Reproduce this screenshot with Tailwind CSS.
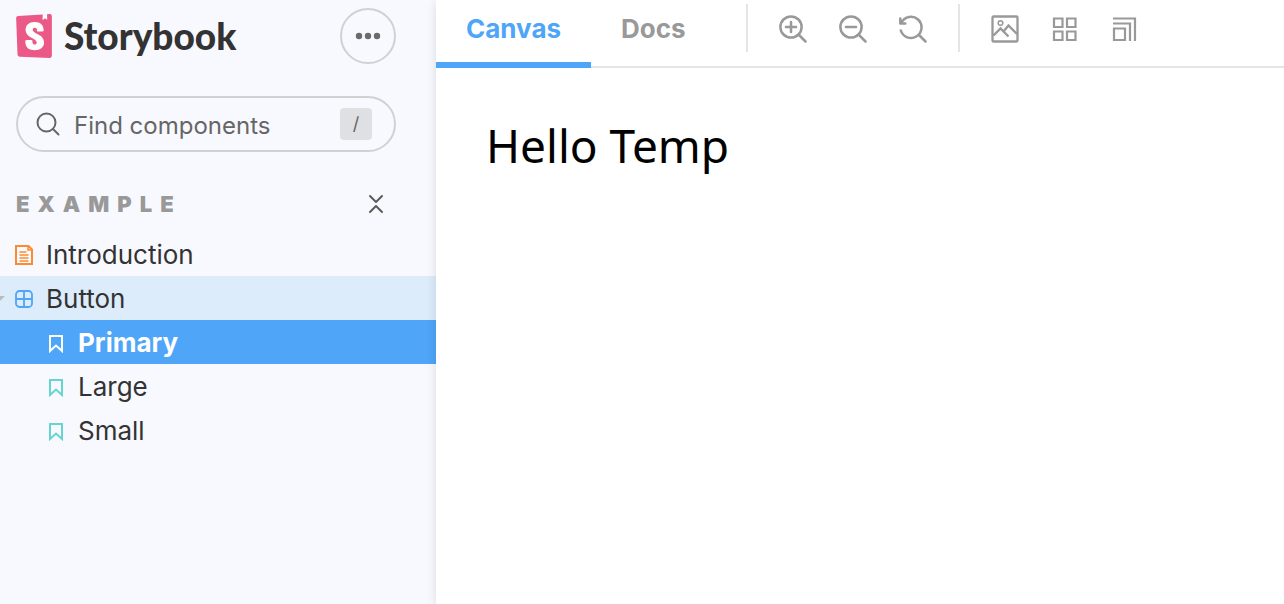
<!DOCTYPE html>
<html lang="en">
<head>
<meta charset="utf-8">
<title>Storybook</title>
<script src="https://cdn.jsdelivr.net/npm/@tailwindcss/browser@4"></script>
</head>
<body class="flex min-h-screen overflow-x-hidden bg-[#f8f9fe] font-['Inter',sans-serif] text-[#333]">
<aside class="w-[436px] shrink-0 pt-2">
  <header class="flex items-center justify-between pr-10 pl-4">
    <a href="#" class="flex items-center gap-3">
      <svg class="h-11 w-9" viewBox="2.300 0 19.400 24" preserveAspectRatio="none" aria-hidden="true">
        <path fill="#fff" d="M6 4h12v16H6zM16.700.400h2.400v2.800h-2.400z"/>
        <path fill="#eb5986" d="M16.71.243l-.12 2.71a.18.18 0 00.29.15l1.06-.8.9.7a.18.18 0 00.28-.14l-.1-2.76 1.33-.1a1.2 1.2 0 011.279 1.2v21.596a1.2 1.2 0 01-1.26 1.2l-16.096-.72a1.2 1.2 0 01-1.15-1.16l-.75-19.797a1.2 1.2 0 011.13-1.27L16.7.222zM13.64 9.3c0 .47 3.16.24 3.59-.08 0-3.2-1.72-4.89-4.859-4.89-3.15 0-4.899 1.72-4.899 4.29 0 4.45 5.999 4.53 5.999 6.959 0 .7-.32 1.1-1.05 1.1-.96 0-1.35-.49-1.3-2.16 0-.36-3.649-.48-3.769 0-.27 4.03 2.23 5.2 5.099 5.2 2.79 0 4.969-1.49 4.969-4.18 0-4.77-6.099-4.64-6.099-6.999 0-.97.72-1.1 1.13-1.1.45 0 1.25.07 1.19 1.87z"/>
      </svg>
      <span class="font-['Lato',sans-serif] text-[37px] leading-11 font-black">Storybook</span>
    </a>
    <button aria-label="Shortcuts" class="flex size-14 items-center justify-center rounded-full border-2 border-[#d0d1d5]">
      <svg class="h-2 w-7" viewBox="0 0 28 8" fill="#6b6b6b"><circle cx="5" cy="4" r="3.2"/><circle cx="14" cy="4" r="3.2"/><circle cx="23" cy="4" r="3.2"/></svg>
    </button>
  </header>
  <label class="mt-8 mr-10 ml-4 flex h-14 items-center rounded-full border-2 border-[#d0d1d3] pr-[22px] pl-[18px]">
    <svg class="size-6 shrink-0" viewBox="0 0 24 24" fill="none" stroke="#666" stroke-width="2" stroke-linecap="round"><circle cx="10.5" cy="10.5" r="9"/><path d="M17 17l5.500 5.500"/></svg>
    <input type="text" placeholder="Find components" aria-label="Find components" class="ml-[14px] min-w-0 flex-1 pt-1 text-2xl outline-none placeholder:text-[#666]">
    <kbd class="flex h-8 w-8 items-center justify-center rounded bg-[#dfe0e3] font-['Inter',sans-serif] text-lg text-[#666]">/</kbd>
  </label>
  <div class="mt-9 flex h-8 items-center justify-between pr-[52px] pl-4">
    <h2 class="text-[22px] leading-8 font-black tracking-[8px] text-[#999]">EXAMPLE</h2>
    <button aria-label="Collapse all" class="flex h-8 w-4 items-center"><svg class="h-5 w-4" viewBox="0 0 16 20" fill="none" stroke="#5c5c5c" stroke-width="2" stroke-linecap="round" stroke-linejoin="round"><path d="M2 2l6 6 6-6M2 18l6-6 6 6"/></svg></button>
  </div>
  <nav class="mt-3 text-[26px] leading-10">
    <a href="#" class="flex h-11 items-center gap-3 pt-[2px] pl-[14px]">
      <svg class="size-5 shrink-0" viewBox="0 0 20 20" fill="none" stroke="#fc8a30" stroke-width="2"><path d="M2 1h12.500L18 4.500V19H2z"/><path d="M14 1v4h4M5.500 7h7M5.500 10h9M5.500 13h9M5.500 16h9" stroke-width="1.500"/></svg>
      Introduction
    </a>
    <a href="#" class="flex h-11 items-center bg-[#dcecfb] pt-[2px]">
      <svg class="h-5 w-[5px] shrink-0" viewBox="0 0 5 20" fill="#bbb"><path d="M-5 7H5L0 12z"/></svg>
      <svg class="mr-3 ml-[9px] size-5 shrink-0" viewBox="0 0 20 20" fill="none" stroke="#4fa5f7" stroke-width="1.800"><rect x="2" y="2" width="16" height="16" rx="3.500"/><path d="M10 2v16M2 10h16"/></svg>
      Button
    </a>
    <a href="#" class="flex h-11 items-center gap-3 bg-[#4fa5f7] pt-[2px] pl-[46px] font-bold text-white">
      <svg class="size-5 shrink-0" viewBox="0 0 20 20" fill="none" stroke="#fff" stroke-width="2"><path d="M4 3h12v15l-6-5.500L4 18z"/></svg>
      Primary
    </a>
    <a href="#" class="flex h-11 items-center gap-3 pt-[2px] pl-[46px]">
      <svg class="size-5 shrink-0" viewBox="0 0 20 20" fill="none" stroke="#66d5cf" stroke-width="2"><path d="M4 3h12v15l-6-5.500L4 18z"/></svg>
      Large
    </a>
    <a href="#" class="flex h-11 items-center gap-3 pt-[2px] pl-[46px]">
      <svg class="size-5 shrink-0" viewBox="0 0 20 20" fill="none" stroke="#66d5cf" stroke-width="2"><path d="M4 3h12v15l-6-5.500L4 18z"/></svg>
      Small
    </a>
  </nav>
</aside>
<main class="min-w-0 flex-1 bg-white shadow-[0_2px_10px_rgba(0,0,0,0.12)]">
  <div class="flex h-[68px] items-start border-b-2 border-[#e5e5e5] text-[#999]">
    <div class="flex h-[68px] shrink-0 text-[26px] leading-[58px] font-bold">
      <button class="h-[68px] border-b-6 border-[#4fa5f7] px-[30px] pb-1 text-[#4fa5f7]">Canvas</button>
      <button class="h-[68px] px-[30px] pb-[10px]">Docs</button>
    </div>
    <div class="mt-1 ml-[30px] flex h-12 shrink-0 items-center gap-8 border-l-2 border-[#e5e5e5] pt-[2px] pl-[31px]">
      <button aria-label="Zoom in"><svg class="size-7" viewBox="0 0 28 28" fill="none" stroke="#999" stroke-width="2.500" stroke-linecap="round"><circle cx="12" cy="12" r="10.600"/><path d="M20 20l6.500 6.500M7 12h10M12 7v10"/></svg></button>
      <button aria-label="Zoom out"><svg class="size-7" viewBox="0 0 28 28" fill="none" stroke="#999" stroke-width="2.500" stroke-linecap="round"><circle cx="12" cy="12" r="10.600"/><path d="M20 20l6.500 6.500M7 12h10"/></svg></button>
      <button aria-label="Reset zoom"><svg class="size-7" viewBox="0 0 28 28" fill="none" stroke="#999" stroke-width="2.500" stroke-linecap="round" stroke-linejoin="round"><path d="M2.500 7.500A10.600 10.600 0 1 1 1.800 15.500M20 20l6.500 6.500M1.300 3.500v5h5"/></svg></button>
    </div>
    <div class="mt-1 ml-[31px] flex h-12 shrink-0 items-center gap-8 border-l-2 border-[#e5e5e5] pt-[2px] pl-[31px]">
      <button aria-label="Background"><svg class="size-7" viewBox="0 0 28 28" fill="none" stroke="#999" stroke-width="2.300"><rect x="1.500" y="1.500" width="25" height="25" rx="1"/><path d="M2.500 20.500l7-7 8 8M12.500 16.500l5-6L26 19" stroke-width="2.400"/><circle cx="9.500" cy="8" r="2.300" stroke-width="1.500"/></svg></button>
      <button aria-label="Grid"><svg class="size-7" viewBox="0 0 28 28" fill="none" stroke="#999" stroke-width="2.200"><path d="M3 3.500h8.500V12H3zM16 3.500h8.500V12H16zM3 16.500h8.500V25H3zM16 16.500h8.500V25H16z"/></svg></button>
      <button aria-label="Viewport"><svg class="size-7" viewBox="0 0 28 28" fill="none" stroke="#999" stroke-width="2.200"><path d="M3 13.500h11V25H3zM2 8.500h17V26M2 3.500h22V26"/></svg></button>
    </div>
  </div>
  <div class="px-[50px] pt-11 font-['Noto_Sans',sans-serif] text-[46px] leading-[66px] text-black">Hello Temp</div>
</main>
</body>
</html>
